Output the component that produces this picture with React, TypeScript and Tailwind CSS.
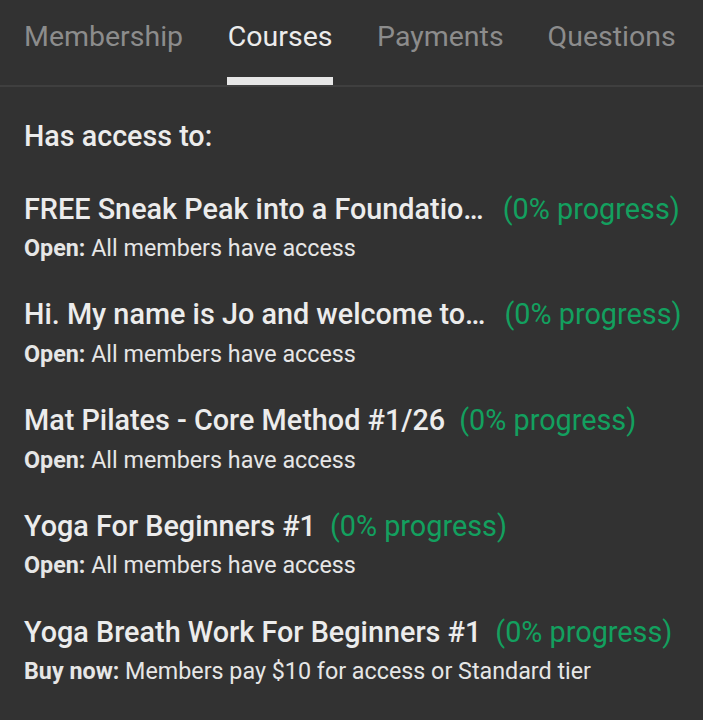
import React from "react";

const tabs = ["Membership", "Courses", "Payments", "Questions"];

const courses = [
  { title: "FREE Sneak Peak into a Foundatio…", label: "Open:", desc: "All members have access", truncated: true },
  { title: "Hi. My name is Jo and welcome to…", label: "Open:", desc: "All members have access", truncated: true },
  { title: "Mat Pilates - Core Method #1/26", label: "Open:", desc: "All members have access", truncated: false },
  { title: "Yoga For Beginners #1", label: "Open:", desc: "All members have access", truncated: false },
  { title: "Yoga Breath Work For Beginners #1", label: "Buy now:", desc: "Members pay $10 for access or Standard tier", truncated: false },
];

export default function App() {
  return (
    <div className="w-[703px] h-[720px] bg-[#323232] overflow-hidden" style={{ fontFamily: "Roboto, sans-serif" }}>
      <div className="flex border-b-2 border-[#3f3f3f] h-[87px] pl-[24px]">
        {tabs.map((t, i) => (
          <div key={t} className={`flex flex-col items-center ${i < 3 ? "mr-[44px]" : ""}`}>
            <div className={`text-[28.5px] leading-none pt-[23px] h-[78px] ${i === 1 ? "text-[#ececec]" : "text-[#8c8c8c]"}`}>{t}</div>
            {i === 1 && <div className="h-[8px] w-[106px] bg-[#e6e6e6]" />}
          </div>
        ))}
      </div>
      <div className="px-[24px] pt-[35px]">
        <div className="text-[28.7px] font-medium text-[#ececec] leading-none">Has access to:</div>
        <div className="flex flex-col mt-[44px] gap-[40.2px]">
          {courses.map((c) => (
            <div key={c.title} className="flex flex-col">
              <div className="flex items-baseline whitespace-nowrap leading-none">
                <span className="text-[28.8px] font-medium text-[#ececec]">{c.title}</span>
                <span className={`text-[28.8px] text-[#13a05f] ${c.truncated ? "ml-[19px]" : "ml-[14px]"}`}>(0% progress)</span>
              </div>
              <div className="text-[23.3px] text-[#e6e6e6] leading-none mt-[13.5px]">
                <span className="font-bold">{c.label}</span> {c.desc}
              </div>
            </div>
          ))}
        </div>
      </div>
    </div>
  );
}
